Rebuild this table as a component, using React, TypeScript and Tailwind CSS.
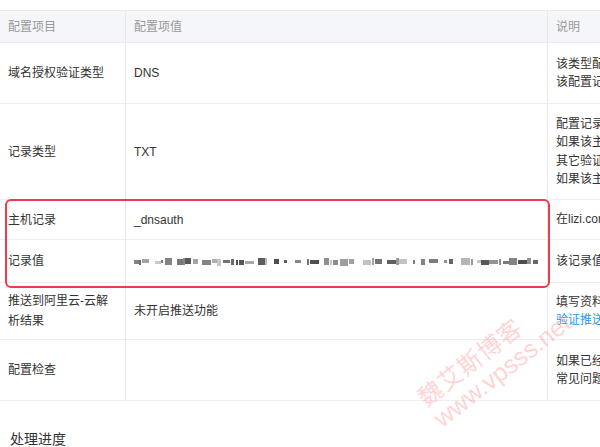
import React from 'react';

const cjk = { fontFamily: '"Liberation Sans", "Noto Sans CJK SC", sans-serif' };

// fake blurred record value: deterministic blocks
const blurBlocks = (() => {
  let seed = 7;
  const rnd = () => {
    seed = (seed * 9301 + 49297) % 233280;
    return seed / 233280;
  };
  const out: { w: number; h: number; gap: number; c: number; dy: number }[] = [];
  let x = 0;
  while (x < 400) {
    const w = 2 + Math.floor(rnd() * 8);
    const gap = rnd() < 0.3 ? 4 + Math.floor(rnd() * 6) : Math.floor(rnd() * 3);
    out.push({ w, h: 3 + Math.floor(rnd() * 5), gap, c: 70 + Math.floor(rnd() * 140), dy: Math.floor(rnd() * 3) });
    x += w + gap;
  }
  return out;
})();

const Row: React.FC<{ h: string; left: React.ReactNode; mid: React.ReactNode; right: React.ReactNode }> = ({ h, left, mid, right }) => (
  <div className={`grid grid-cols-[126px_422px_1fr] border-b border-[#eceef2] ${h}`}>
    <div className="flex items-center px-2 border-r border-[#e6e8ec] leading-[20px]">{left}</div>
    <div className="flex items-center px-2 border-r border-[#e6e8ec]">{mid}</div>
    <div className="flex flex-col justify-center pl-2 leading-[18.5px] whitespace-nowrap">{right}</div>
  </div>
);

export default function App() {
  return (
    <div className="relative w-[600px] h-[447px] overflow-hidden bg-white text-[12px] text-[#333]" style={cjk}>
      <div className="pt-[10px] w-[900px]">
        <div className="grid grid-cols-[126px_422px_1fr] h-[33px] bg-[#f5f6f9] border-t border-b border-[#e8eaef] text-[#999]">
          <div className="flex items-center px-2 border-r border-[#e6e8ec]">配置项目</div>
          <div className="flex items-center px-2 border-r border-[#e6e8ec]">配置项值</div>
          <div className="flex items-center pl-2">说明</div>
        </div>
        <Row
          h="h-[61px]"
          left="域名授权验证类型"
          mid="DNS"
          right={<><div>该类型配置项用于验证域名所有权</div><div>该配置记录需要添加到域名解析中</div></>}
        />
        <Row
          h="h-[96px]"
          left="记录类型"
          mid="TXT"
          right={
            <>
              <div>配置记录类型为TXT</div>
              <div>如果该主机记录已存在其它记录</div>
              <div>其它验证方式可能会产生冲突</div>
              <div>如果该主机记录已被占用请先删除</div>
            </>
          }
        />
        <Row h="h-[40px]" left="主机记录" mid="_dnsauth" right={<div>在lizi.com下添加该主机记录</div>} />
        <Row
          h="h-[43px]"
          left="记录值"
          mid={
            <div className="flex items-center h-[10px]">
              {blurBlocks.map((b, i) => (
                <span
                  key={i}
                  className="inline-block"
                  style={{
                    width: b.w,
                    height: b.h,
                    marginRight: b.gap,
                    marginTop: b.dy,
                    backgroundColor: `rgb(${b.c},${b.c},${b.c})`,
                  }}
                />
              ))}
            </div>
          }
          right={<div>该记录值由系统自动生成</div>}
        />
        <Row
          h="h-[57px]"
          left={<span>推送到阿里云-云解<br />析结果</span>}
          mid="未开启推送功能"
          right={
            <>
              <div>填写资料后可自动推送</div>
              <div className="text-[#1e9bf0]">验证推送结果</div>
            </>
          }
        />
        <Row
          h="h-[61px]"
          left="配置检查"
          mid=""
          right={
            <>
              <div>如果已经配置完成请点击检查</div>
              <div>常见问题请参考帮助文档</div>
            </>
          }
        />
        <div className="pt-[28px] pl-[10px] text-[14px] text-[#333]">处理进度</div>
      </div>

      {/* red highlight box */}
      <div className="absolute left-[5px] top-[199px] w-[545px] h-[89px] border-2 border-[#f23a4c] rounded-[6px]" />

      {/* watermark */}
      <div className="absolute left-[414px] top-[392px] origin-top-left -rotate-[38deg] text-[#ff8080]/35 pointer-events-none leading-none whitespace-nowrap">
        <div className="text-[24px] tracking-[1px]">魏艾斯博客</div>
        <div className="text-[25px] mt-[1px]">www.vpsss.net</div>
      </div>
    </div>
  );
}
